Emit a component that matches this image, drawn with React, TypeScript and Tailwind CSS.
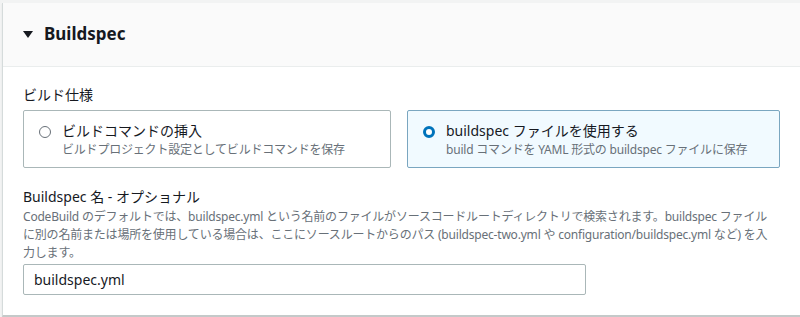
import React from "react";

export default function App() {
  const font = { fontFamily: '"Noto Sans", "Noto Sans CJK JP", sans-serif' };
  return (
    <div className="w-[800px] h-[317px] bg-[#f2f3f3] pt-[3px] pl-[2px] overflow-hidden" style={font}>
      <div className="bg-white border-l border-[#d5dbdb] border-b-2 border-b-[#c4c9c9] shadow-[0_1px_1px_rgba(0,0,0,0.1)]">
        <div className="h-[64px] bg-[#fafafa] border-b border-[#eaeded] flex items-center pl-[20px] gap-[11px]">
          <svg width="10" height="7" viewBox="0 0 10 7">
            <polygon points="0,0 10,0 5,7" fill="#16191f" />
          </svg>
          <span className="text-[17px] font-bold text-[#16191f] leading-none mb-[2px]">Buildspec</span>
        </div>
        <div className="pl-[20px] pr-[20px] pt-[17px] pb-[20px]">
          <div className="text-[14px] leading-[22px] text-[#16191f]">ビルド仕様</div>
          <div className="grid grid-cols-[368px_1fr] gap-[16px] mt-[4px]">
            <div className="h-[58px] border border-[#aab7b8] rounded-[2px] flex pt-[9px] pl-[15px]">
              <div className="w-[12px] h-[12px] rounded-full border border-[#687078] mt-[6px] shrink-0" />
              <div className="ml-[11px]">
                <div className="text-[14px] leading-[22px] text-[#16191f]">ビルドコマンドの挿入</div>
                <div className="text-[12px] leading-[16px] text-[#687078] tracking-[-0.2px]">ビルドプロジェクト設定としてビルドコマンドを保存</div>
              </div>
            </div>
            <div className="h-[58px] border border-[#7aa6c0] bg-[#f1faff] rounded-[2px] flex pt-[9px] pl-[15px]">
              <div className="w-[12px] h-[12px] rounded-full border-[3.5px] border-[#0073bb] bg-white mt-[6px] shrink-0" />
              <div className="ml-[11px]">
                <div className="text-[14px] leading-[22px] text-[#16191f]">buildspec ファイルを使用する</div>
                <div className="text-[12px] leading-[16px] text-[#687078] tracking-[-0.2px]">build コマンドを YAML 形式の buildspec ファイルに保存</div>
              </div>
            </div>
          </div>
          <div className="mt-[18px] text-[14px] leading-[22px] text-[#16191f]">Buildspec 名 - オプショナル</div>
          <div className="text-[12px] leading-[18px] text-[#687078] whitespace-nowrap tracking-[-0.2px]">
            CodeBuild のデフォルトでは、buildspec.yml という名前のファイルがソースコードルートディレクトリで検索されます。buildspec ファイル
            <br />
            に別の名前または場所を使用している場合は、ここにソースルートからのパス (buildspec-two.yml や configuration/buildspec.yml など) を入
            <br />
            力します。
          </div>
          <div className="mt-[2px] w-[563px] h-[31px] border border-[#aab7b8] rounded-[2px] flex items-center pl-[10px] text-[14px] text-[#16191f]">
            buildspec.yml
          </div>
        </div>
      </div>
    </div>
  );
}
